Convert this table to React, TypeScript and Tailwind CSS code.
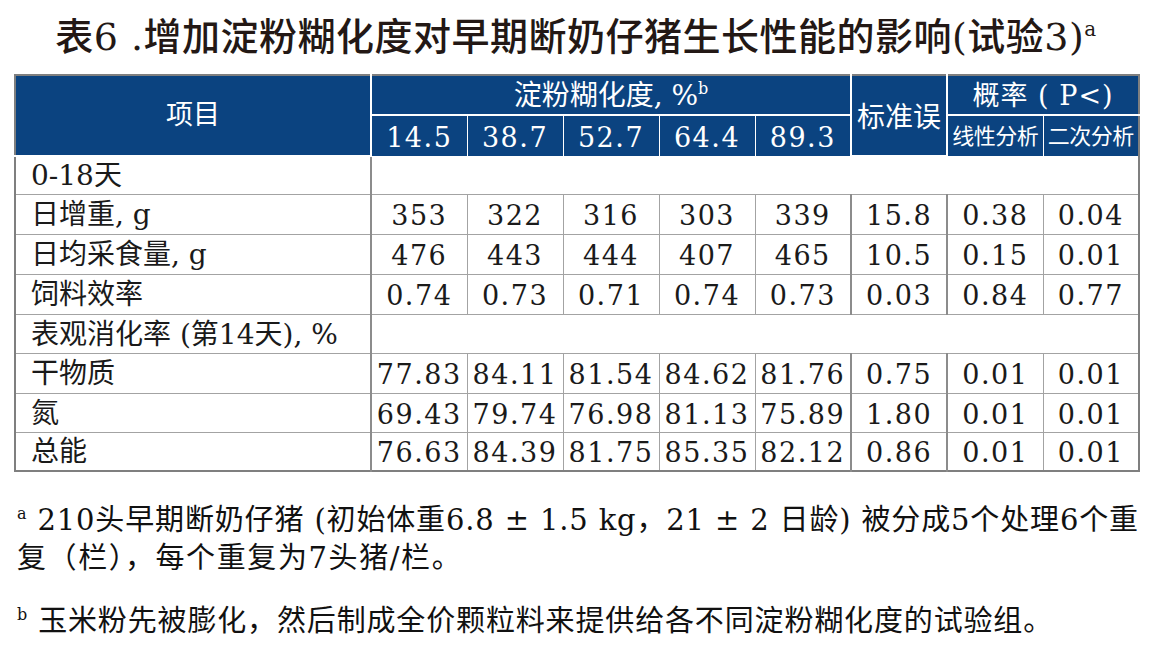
import React from "react";

const F = "font-['DejaVu_Serif','Noto_Sans_CJK_SC',serif]";

type Row = { label: React.ReactNode; vals?: string[]; h: string };

const rows: Row[] = [
  { label: "0-18天", h: "h-[38px]" },
  { label: "日增重, g", vals: ["353", "322", "316", "303", "339", "15.8", "0.38", "0.04"], h: "h-[40px]" },
  { label: "日均采食量, g", vals: ["476", "443", "444", "407", "465", "10.5", "0.15", "0.01"], h: "h-[40px]" },
  { label: "饲料效率", vals: ["0.74", "0.73", "0.71", "0.74", "0.73", "0.03", "0.84", "0.77"], h: "h-[40px]" },
  { label: "表观消化率 (第14天), %", h: "h-[39px]" },
  { label: "干物质", vals: ["77.83", "84.11", "81.54", "84.62", "81.76", "0.75", "0.01", "0.01"], h: "h-[40px]" },
  { label: "氮", vals: ["69.43", "79.74", "76.98", "81.13", "75.89", "1.80", "0.01", "0.01"], h: "h-[39px]" },
  { label: "总能", vals: ["76.63", "84.39", "81.75", "85.35", "82.12", "0.86", "0.01", "0.01"], h: "h-[39px]" },
];

const valBorder = (i: number) =>
  i === 4 || i === 5
    ? "border border-[#a3a3a3] border-r-2 border-r-[#8c8c8c]"
    : "border border-[#a3a3a3]";

export default function App() {
  return (
    <div className={`w-[1152px] h-[650px] bg-white text-[#1a1a1a] ${F} overflow-hidden`}>
      <div className="pt-[12px] h-[74px] text-center text-[38px] leading-[50px] font-medium tracking-[0.5px] text-[#231815]">
        表6 .增加淀粉糊化度对早期断奶仔猪生长性能的影响(试验3)
        <sup className="text-[20px] -top-[0.7em] font-normal">a</sup>
      </div>
      <div className="pl-[14px]">
        <table className="table-fixed border-collapse border-2 border-[#7f7f7f] w-[1124px]">
          <colgroup>
            <col className="w-[356px]" />
            <col className="w-[96px]" />
            <col className="w-[96px]" />
            <col className="w-[96px]" />
            <col className="w-[96px]" />
            <col className="w-[96px]" />
            <col className="w-[96px]" />
            <col className="w-[96px]" />
            <col className="w-[96px]" />
          </colgroup>
          <thead className="bg-[#0b4380] text-white font-normal">
            <tr className="h-[40px]">
              <th rowSpan={2} className="border-2 border-white border-l-[#7f7f7f] border-t-[#7f7f7f] font-normal text-[27px] align-middle">
                项目
              </th>
              <th colSpan={5} className="border-2 border-white border-t-[#7f7f7f] font-normal text-[28px] leading-none pt-[2px]">
                淀粉糊化度, %<sup className="text-[16px] -top-[0.7em]">b</sup>
              </th>
              <th rowSpan={2} className="border-2 border-white border-t-[#7f7f7f] font-normal text-[28px] leading-none whitespace-nowrap px-0 pt-[4px]">
                标准误
              </th>
              <th colSpan={2} className="border-2 border-white border-t-[#7f7f7f] border-r-[#7f7f7f] font-normal text-[27px] leading-none tracking-[1px]">
                概率 ( P&lt;)
              </th>
            </tr>
            <tr className="h-[41px]">
              {["14.5", "38.7", "52.7", "64.4", "89.3"].map((v) => (
                <th key={v} className="border border-white font-normal text-[27px] tracking-[1.5px] leading-none pt-[4px]">
                  {v}
                </th>
              ))}
              <th className="border border-white font-normal text-[22px] whitespace-nowrap leading-none pt-[3px] px-0 tracking-[-0.5px]">
                线性分析
              </th>
              <th className="border border-white border-r-[#7f7f7f] font-normal text-[22px] whitespace-nowrap leading-none pt-[3px] px-0 tracking-[-0.5px]">
                二次分析
              </th>
            </tr>
          </thead>
          <tbody>
            {rows.map((r, ri) => (
              <tr key={ri} className={r.h}>
                <td className="border border-[#a3a3a3] border-r-2 border-r-[#8c8c8c] pl-[15px] text-[28px] leading-none whitespace-nowrap pt-[2px]">
                  {r.label}
                </td>
                {r.vals ? (
                  r.vals.map((v, i) => (
                    <td
                      key={i}
                      className={`${valBorder(i)} text-center text-[27px] tracking-[1.5px] leading-none whitespace-nowrap pt-[3px] px-0`}
                    >
                      {v}
                    </td>
                  ))
                ) : (
                  <td colSpan={8} className="border border-[#a3a3a3]" />
                )}
              </tr>
            ))}
          </tbody>
        </table>
      </div>
      <div className="pl-[17px] pt-[29px] text-[29px] leading-[38px] text-[#111] whitespace-nowrap tracking-[0.85px]">
        <div>
          <sup className="text-[16px] -top-[0.7em]">a</sup> 210头早期断奶仔猪 (初始体重6.8 ± 1.5 kg，21 ± 2 日龄) 被分成5个处理6个重
          <br />
          <span className="tracking-[1.6px]">复（栏），每个重复为7头猪/栏。</span>
        </div>
        <div className="mt-[25px]">
          <sup className="text-[16px] -top-[0.7em]">b</sup> 玉米粉先被膨化，然后制成全价颗粒料来提供给各不同淀粉糊化度的试验组。
        </div>
      </div>
    </div>
  );
}
